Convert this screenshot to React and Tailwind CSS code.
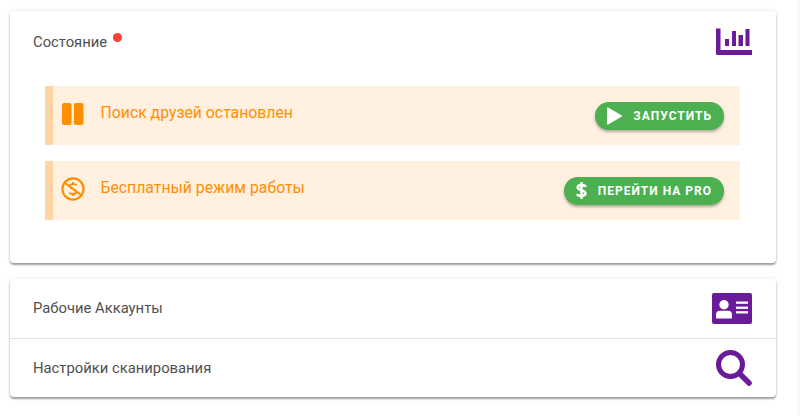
import React from "react";

const Pause = () => (
  <svg width="22" height="22" viewBox="0 0 22 22" fill="#ff8f00">
    <rect x="0" y="0" width="9.5" height="22" rx="2" />
    <rect x="12" y="0" width="9.5" height="22" rx="2" />
  </svg>
);
const NoMoney = () => (
  <svg width="24" height="24" viewBox="0 0 24 24" fill="none" stroke="#ff8f00" strokeWidth="2">
    <circle cx="12" cy="12" r="10.6" strokeWidth="2.2" />
    <path d="M4 6 L20 18" />
    <path d="M15.5 8.5 C15 6.8 9 6.5 8.5 9 C8 11 15.5 12.5 15.5 15 C15 17.5 9 17.5 8.5 15.5" strokeWidth="1.8" />
    <path d="M12 5 V7 M12 17 V19" />
  </svg>
);
const Chart = () => (
  <svg width="36" height="28" viewBox="0 0 36 28" fill="#6a1b9a">
    <path d="M0 0.5 H4.5 V22 H36 V27 H1.5 Q0 27 0 25.5 Z" />
    <rect x="9" y="11" width="4" height="7" />
    <rect x="16" y="3" width="4" height="15" />
    <rect x="22.5" y="7" width="4.5" height="11" />
    <rect x="29.5" y="1" width="4" height="17" />
  </svg>
);
const IdCard = () => (
  <svg width="40" height="31" viewBox="0 0 40 31">
    <rect width="40" height="31" rx="2" fill="#6a1b9a" />
    <circle cx="12" cy="11.7" r="4.7" fill="#fff" />
    <path d="M4 25.4 V21.7 Q4 17.7 8 17.7 H16 Q20 17.7 20 21.7 V25.4 Z" fill="#fff" />
    <rect x="24" y="8.5" width="12" height="2.3" fill="#fff" />
    <rect x="24" y="13.6" width="12" height="2.3" fill="#fff" />
    <rect x="24" y="18.2" width="12" height="2.3" fill="#fff" />
  </svg>
);
const Search = () => (
  <svg width="36" height="36" viewBox="0 0 36 36" fill="none" stroke="#6a1b9a">
    <circle cx="14.5" cy="14.5" r="12" strokeWidth="5" />
    <path d="M23.5 23.5 L33 33" strokeWidth="5.5" strokeLinecap="round" />
  </svg>
);
const Play = () => (
  <svg width="15" height="18" viewBox="0 0 15 18" fill="#fff">
    <path d="M0 1.2 Q0 0 1.2 0.6 L14.5 8.2 Q15.3 9 14.5 9.8 L1.2 17.4 Q0 18 0 16.8 Z" />
  </svg>
);
const Dollar = () => (
  <svg width="11" height="17" viewBox="0 0 11 17" fill="none" stroke="#fff">
    <path d="M9.5 5 C9 2.5 2 2.5 1.7 5.3 C1.5 8.3 9.5 8 9.5 11.5 C9.3 14.5 2 14.5 1.2 12" strokeWidth="2.6" />
    <path d="M5.5 0 V17" strokeWidth="2.4" />
  </svg>
);

const Banner = ({ icon, text, button, btnIcon }) => (
  <div className="flex h-[59px] items-center justify-between border-l-8 border-[#ffd6a3] bg-[#fff0e0] pr-4">
    <div className="flex items-center">
      <div className="mb-[4px] ml-[7.5px] flex w-[24px] justify-center">{icon}</div>
      <span className="mb-[6px] ml-[16px] text-[15.8px] text-[#ff8f00]">{text}</span>
    </div>
    <button className="flex h-[28px] items-center rounded-full bg-[#4caf50] pl-[12px] pr-[12px] text-[12px] font-bold uppercase tracking-[1px] text-white shadow-[0_2px_3px_rgba(0,0,0,0.3)]">
      {btnIcon}
      <span>{button}</span>
    </button>
  </div>
);

export default function App() {
  return (
    <div className="flex h-[416px] w-[800px] overflow-hidden bg-white font-['Roboto',sans-serif] text-[#505050]">
      <div className="flex flex-1 flex-col gap-4 pl-[10px] pr-[21px] pt-[11px]">
        <section className="h-[252px] rounded shadow-[0_2px_2px_rgba(0,0,0,0.35),0_0_4px_rgba(0,0,0,0.1)]">
          <div className="flex h-[75px] items-start justify-between pl-[23px] pr-[24px] pt-[17px]">
            <div className="relative pt-[4px] text-[14.8px] leading-5">
              Состояние
              <span className="absolute -right-[15px] top-[5px] h-[9px] w-[9px] rounded-full bg-[#f44336]" />
            </div>
            <Chart />
          </div>
          <div className="flex flex-col gap-4 pl-[35px] pr-[36px]">
            <Banner icon={<Pause />} text="Поиск друзей остановлен" button="Запустить" btnIcon={<span className="mr-[11px]"><Play /></span>} />
            <Banner icon={<NoMoney />} text="Бесплатный режим работы" button="Перейти на PRO" btnIcon={<span className="mr-[11px]"><Dollar /></span>} />
          </div>
        </section>
        <section className="rounded shadow-[0_2px_2px_rgba(0,0,0,0.35),0_0_4px_rgba(0,0,0,0.1)]">
          <div className="flex h-[60px] items-center justify-between border-b border-[#e0e0e0] pl-[23px] pr-[24px]">
            <span className="text-[14.8px]">Рабочие Аккаунты</span>
            <IdCard />
          </div>
          <div className="flex h-[58px] items-center justify-between pl-[23px] pr-[24px]">
            <span className="text-[14.8px]">Настройки сканирования</span>
            <Search />
          </div>
        </section>
      </div>
      <div className="h-full w-[3px] bg-[#f7f7f7]" />
    </div>
  );
}
